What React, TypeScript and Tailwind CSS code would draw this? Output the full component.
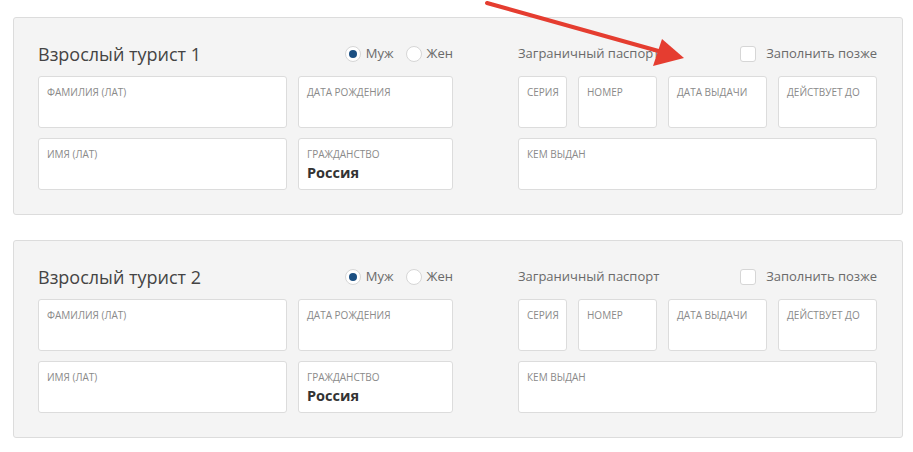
import React from "react";

function Field({ label, value, className = "" }: { label: string; value?: string; className?: string }) {
  return (
    <div className={`h-[52px] bg-white border border-[#dcdcdc] rounded-[3px] px-2 pt-[9px] ${className}`}>
      <div className="text-[10px] leading-[12px] text-[#8a8a8a] uppercase whitespace-nowrap">{label}</div>
      {value && <div className="mt-[4px] text-[14.5px] leading-[18px] font-bold text-[#333]">{value}</div>}
    </div>
  );
}

function Radio({ checked, label }: { checked?: boolean; label: string }) {
  return (
    <div className="flex items-center gap-[5px]">
      <span className="w-4 h-4 rounded-full bg-white border border-[#d6d6d6] flex items-center justify-center">
        {checked && <span className="w-[8px] h-[8px] rounded-full bg-[#1b4f82]" />}
      </span>
      <span className="text-[13px] text-[#6a6a6a]">{label}</span>
    </div>
  );
}

function Card({ n }: { n: number }) {
  return (
    <div className="bg-[#f4f4f4] border border-[#dcdcdc] rounded-[3px] pl-6 pr-[25px] pt-[24px] pb-6 flex justify-between">
      <div className="w-[415px]">
        <div className="h-6 flex items-center justify-between mb-[10px]">
          <div className="text-[18px] text-[#444] leading-6">Взрослый турист {n}</div>
          <div className="flex items-center gap-[12px]">
            <Radio checked label="Муж" />
            <Radio label="Жен" />
          </div>
        </div>
        <div className="grid grid-cols-[249px_155px] gap-x-[11px] gap-y-[10px]">
          <Field label="Фамилия (лат)" />
          <Field label="Дата рождения" />
          <Field label="Имя (лат)" />
          <Field label="Гражданство" value="Россия" />
        </div>
      </div>
      <div className="w-[359px]">
        <div className="h-6 flex items-center justify-between mb-[10px]">
          <div className="text-[13px] text-[#6a6a6a]">Заграничный паспорт</div>
          <div className="flex items-center gap-[10px]">
            <span className="w-4 h-4 rounded-[3px] bg-white border border-[#d6d6d6]" />
            <span className="text-[13px] text-[#6a6a6a]">Заполнить позже</span>
          </div>
        </div>
        <div className="flex gap-[11px] mb-[10px]">
          <Field label="Серия" className="w-[49px]" />
          <Field label="Номер" className="w-[79px]" />
          <Field label="Дата выдачи" className="w-[99px]" />
          <Field label="Действует до" className="w-[99px]" />
        </div>
        <Field label="Кем выдан" />
      </div>
    </div>
  );
}

export default function App() {
  return (
    <div className="relative w-[913px] h-[452px] bg-white pl-[13px] pr-[10px] pt-[17px] flex flex-col gap-[25px]" style={{ fontFamily: '"Open Sans", "Noto Sans", sans-serif' }}>
      <Card n={1} />
      <Card n={2} />
      <svg className="absolute left-0 top-0 pointer-events-none" width="913" height="452" viewBox="0 0 913 452">
        <line x1="487" y1="3" x2="662" y2="52" stroke="#e53d30" strokeWidth="4" strokeLinecap="round" />
        <polygon points="684,58 662,39 653,66" fill="#e53d30" />
      </svg>
    </div>
  );
}
